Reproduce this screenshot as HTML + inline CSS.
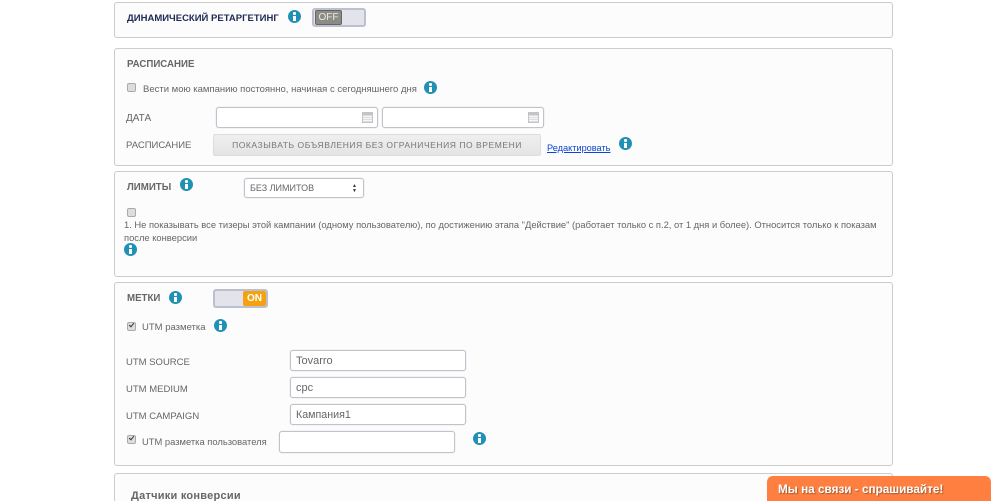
<!DOCTYPE html>
<html><head><meta charset="utf-8">
<style>
html,body{margin:0;padding:0;background:#fff;width:1006px;height:501px;overflow:hidden;}
body{position:relative;font-family:"Liberation Sans",sans-serif;color:#666;}
.p{position:absolute;left:114px;width:777px;background:#fcfcfc;border:1px solid #ccc;border-radius:3px;}
.t{position:absolute;white-space:nowrap;font-size:10px;line-height:12px;}
.b{font-weight:bold;}
.i{position:absolute;width:13px;height:13px;border-radius:50%;background:#2190b5;}
.i:before{content:"";position:absolute;left:5px;top:2px;width:3px;height:2.5px;background:#fff;border-radius:1px;}
.i:after{content:"";position:absolute;left:5px;top:5.5px;width:3px;height:5px;background:#fff;}
.in{position:absolute;box-sizing:border-box;background:#fff;border:1px solid #c2c2ca;border-radius:3px;box-shadow:0 0 1px #c0c0d0;font-size:11px;line-height:20px;padding-left:5px;color:#666;white-space:nowrap;}
.cb{position:absolute;box-sizing:border-box;width:9px;height:9px;background:#ddd;border:1px solid #aaa;border-radius:2px;}
.cb.c:after{content:"";position:absolute;left:1px;top:0;width:4px;height:2px;border-left:1.6px solid #333;border-bottom:1.6px solid #333;transform:rotate(-50deg);}
.cal{position:absolute;width:11px;height:11px;box-sizing:border-box;border:1px solid #c4c4c4;background:repeating-linear-gradient(0deg,#ddd 0 1px,#f6f6f6 1px 2px);border-top:3px solid #c4c4c4;}
.tg{position:absolute;box-sizing:border-box;width:54px;height:19px;background:#e3e3ec;border:2px solid #bcc0ce;border-radius:3px;}
.kn{position:absolute;top:0;width:26px;height:15px;line-height:15px;text-align:center;color:#fff;font-size:10px;font-weight:bold;border-radius:2px;}
</style></head><body>

<div class="p" style="top:2px;height:34px"></div>
<div class="t b" style="left:127px;top:13px;color:#1f2a55;font-size:9.5px">ДИНАМИЧЕСКИЙ РЕТАРГЕТИНГ</div>
<div class="i" style="left:288px;top:10px"></div>
<div class="tg" style="left:312px;top:8px"><div class="kn" style="left:1px;background:#8c8c84;color:#e8e8e8;border:1px solid #666;height:13px;line-height:13px;width:25px;font-weight:normal">OFF</div></div>

<div class="p" style="top:48px;height:116px"></div>
<div class="t b" style="left:127px;top:59px;color:#666;font-size:9.7px">РАСПИСАНИЕ</div>
<div class="cb" style="left:127px;top:83px"></div>
<div class="t" style="left:143px;top:84px;font-size:9.5px">Вести мою кампанию постоянно, начиная с сегодняшнего дня</div>
<div class="i" style="left:424px;top:81px"></div>
<div class="t" style="left:126px;top:113px;font-size:10px">ДАТА</div>
<div class="in" style="left:216px;top:107px;width:162px;height:21px"></div>
<div class="cal" style="left:362px;top:112px"></div>
<div class="in" style="left:382px;top:107px;width:162px;height:21px"></div>
<div class="cal" style="left:528px;top:112px"></div>
<div class="t" style="left:126px;top:140px;font-size:9.5px">РАСПИСАНИЕ</div>
<div style="position:absolute;box-sizing:border-box;left:213px;top:134px;width:328px;height:22px;border-radius:2px;background:linear-gradient(#efefef,#e4e4e4);border:1px solid #ddd;text-align:center;line-height:20px;font-size:8.5px;letter-spacing:.55px;color:#777;white-space:nowrap">ПОКАЗЫВАТЬ ОБЪЯВЛЕНИЯ БЕЗ ОГРАНИЧЕНИЯ ПО ВРЕМЕНИ</div>
<div class="t" style="left:547px;top:142px;font-size:9.2px;color:#0b45d0;text-decoration:underline">Редактировать</div>
<div class="i" style="left:619px;top:137px"></div>

<div class="p" style="top:171px;height:104px"></div>
<div class="t b" style="left:127px;top:182px;font-size:9.7px">ЛИМИТЫ</div>
<div class="i" style="left:180px;top:178px"></div>
<div class="in" style="left:244px;top:178px;width:120px;height:20px;font-size:9px;line-height:19px;padding-left:5px">БЕЗ ЛИМИТОВ</div>
<div class="t" style="left:352px;top:184px;font-size:5px;line-height:5px;color:#333">▲</div>
<div class="t" style="left:352px;top:189px;font-size:5px;line-height:5px;color:#333">▼</div>
<div class="cb" style="left:127px;top:208px"></div>
<div class="t" style="left:124px;top:219px;font-size:9.37px;line-height:13px">1. Не показывать все тизеры этой кампании (одному пользователю), по достижению этапа "Действие" (работает только с п.2, от 1 дня и более). Относится только к показам<br>после конверсии</div>
<div class="i" style="left:124px;top:243px"></div>

<div class="p" style="top:282px;height:182px"></div>
<div class="t b" style="left:127px;top:293px;font-size:9.7px">МЕТКИ</div>
<div class="i" style="left:169px;top:291px"></div>
<div class="tg" style="left:213px;top:289px;width:55px"><div class="kn" style="left:28px;width:23px;background:#f6a10f">ON</div></div>
<div class="cb c" style="left:127px;top:322px"></div>
<div class="t" style="left:142px;top:322px;font-size:9.5px">UTM разметка</div>
<div class="i" style="left:214px;top:319px"></div>

<div class="t" style="left:126px;top:357px;font-size:9.5px">UTM SOURCE</div>
<div class="in" style="left:290px;top:350px;width:176px;height:21px">Tovarro</div>
<div class="t" style="left:126px;top:384px;font-size:9.5px">UTM MEDIUM</div>
<div class="in" style="left:290px;top:377px;width:176px;height:21px">cpc</div>
<div class="t" style="left:126px;top:411px;font-size:9.5px">UTM CAMPAIGN</div>
<div class="in" style="left:290px;top:404px;width:176px;height:21px;font-size:10.7px">Кампания1</div>
<div class="cb c" style="left:127px;top:435px"></div>
<div class="t" style="left:142px;top:436px;font-size:9.4px">UTM разметка пользователя</div>
<div class="in" style="left:279px;top:431px;width:176px;height:22px"></div>
<div class="i" style="left:473px;top:432px"></div>

<div class="p" style="top:473px;height:27px;border-bottom:0;border-radius:3px 3px 0 0"></div>
<div class="t b" style="left:131px;top:490px;font-size:11px;line-height:13px;letter-spacing:.25px">Датчики конверсии</div>

<div style="position:absolute;left:767px;top:476px;width:224px;height:25px;background:#ff7f41;border-radius:6px 6px 0 0"></div>
<div class="t b" style="left:778px;top:483px;font-size:11.75px;line-height:14px;color:#fff;text-shadow:1px 1px 1px #a05a30">Мы на связи - спрашивайте!</div>

</body></html>
